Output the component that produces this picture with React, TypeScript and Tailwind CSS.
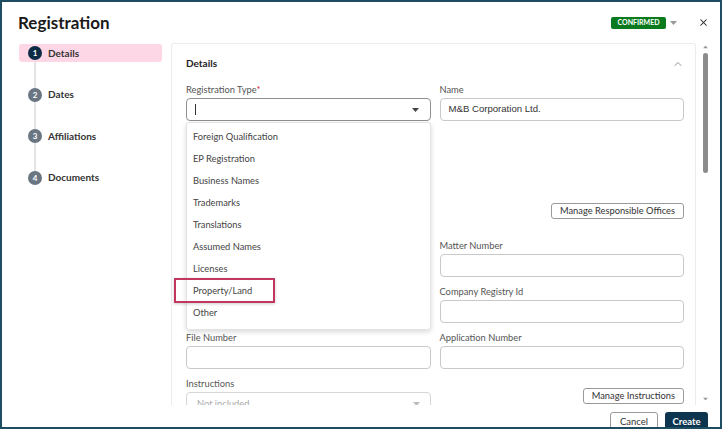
import { ChevronUp, X } from "lucide-react";

const steps = ["Details", "Dates", "Affiliations", "Documents"];

const options = [
  "Foreign Qualification",
  "EP Registration",
  "Business Names",
  "Trademarks",
  "Translations",
  "Assumed Names",
  "Licenses",
  "Property/Land",
  "Other",
];

function Caret({ className = "" }: { className?: string }) {
  return (
    <svg width="7" height="4" viewBox="0 0 7 4" className={className}>
      <path d="M0 0h7L3.5 4z" fill="currentColor" />
    </svg>
  );
}

function Field({ label, value, required }: { label: string; value?: string; required?: boolean }) {
  return (
    <div>
      <div className="text-[9.3px] leading-[13px] text-[#555]">
        {label}
        {required && <span className="text-[#d11f3a]">*</span>}
      </div>
      <div className="mt-[2px] flex h-[23px] items-center rounded-[4px] border border-[#c9c9c9] bg-white px-[8px] font-['Liberation_Sans',sans-serif] text-[9.6px] text-[#333]">
        {value}
      </div>
    </div>
  );
}

export default function App() {
  return (
    <div className="flex h-[429px] w-[722px] flex-col overflow-hidden border-2 border-[#1e4d62] bg-white font-['Lato',sans-serif] text-[#333]">
      <div className="flex h-[41px] shrink-0 items-center pl-[16px] pr-[11px]">
        <h1 className="text-[17px] font-bold leading-none text-[#1a1a1a]">Registration</h1>
        <div className="ml-auto flex items-center">
          <span className="flex h-[12px] w-[55px] items-center justify-center rounded-[2px] bg-[#0b7a1f] text-[7px] font-bold text-white">
            CONFIRMED
          </span>
          <Caret className="ml-[4px] text-[#999]" />
          <X className="ml-[21px] h-[11px] w-[11px] text-[#222]" strokeWidth={2.2} />
        </div>
      </div>

      <div className="flex min-h-0 flex-1">
        <div className="w-[169px] shrink-0 pl-[17px]">
          <div className="relative w-[143px]">
            <div className="absolute left-[15px] top-[9px] h-[125px] w-[2px] bg-[#e4e4e4]" />
            {steps.map((s, i) => (
              <div
                key={s}
                className={`relative flex h-[18px] items-center rounded-[3px] pl-[9px] ${
                  i === 0 ? "bg-[#fdd7e5]" : ""
                } ${i > 0 ? "mt-[23.5px]" : "mt-[1px]"}`}
              >
                <span
                  className={`flex h-[14px] w-[14px] items-center justify-center rounded-full text-[8px] font-bold text-white ${
                    i === 0 ? "bg-[#0c2c45]" : "bg-[#6a7783]"
                  }`}
                >
                  {i + 1}
                </span>
                <span className="ml-[6px] text-[10px] font-bold text-[#333]">{s}</span>
              </div>
            ))}
          </div>
        </div>

        <div className="min-w-0 flex-1 overflow-hidden">
          <div className="relative rounded-[3px] border border-[#ececec] bg-white pb-[20px] pl-[14px] pr-[11px] pt-[13px] shadow-[0_0_4px_rgba(0,0,0,0.06)]">
            <div className="flex h-[13px] items-center justify-between">
              <span className="text-[10px] font-bold leading-[13px] text-[#222]">Details</span>
              <ChevronUp className="h-[12px] w-[12px] text-[#777]" strokeWidth={1.6} />
            </div>

            <div className="mt-[13px] grid grid-cols-2 gap-x-[9px]">
              <div>
                <div className="text-[9.3px] leading-[13px] text-[#555]">
                  Registration Type<span className="text-[#d11f3a]">*</span>
                </div>
                <div className="relative mt-[2px]">
                  <div className="flex h-[23px] items-center rounded-[4px] border border-[#8f8f8f] bg-white px-[8px]">
                    <span className="h-[11px] w-px bg-[#333]" />
                    <Caret className="ml-auto mr-[3px] text-[#444]" />
                  </div>
                  <div className="absolute left-0 top-[24px] z-10 w-full rounded-[3px] border border-[#e3e3e3] bg-white pb-[5px] pt-[3px] shadow-[0_2px_5px_rgba(0,0,0,0.15)]">
                    {options.map((o) => (
                      <div key={o} className="flex h-[22px] items-center pl-[6px] text-[9.3px] text-[#444]">
                        {o}
                      </div>
                    ))}
                  </div>
                  <div className="absolute left-[-12px] top-[180px] z-20 h-[25px] w-[101px] border-2 border-[#c3375f] shadow-[0_1px_3px_rgba(0,0,0,0.2)]" />
                </div>
              </div>
              <Field label="Name" value="M&B Corporation Ltd." />
            </div>

            <div className="mt-[82px] flex justify-end">
              <button className="h-[16px] rounded-[3px] border border-[#9a9a9a] px-[8px] text-[9.3px] leading-none text-[#333]">
                Manage Responsible Offices
              </button>
            </div>

            <div className="mt-[20px] grid grid-cols-2 gap-x-[9px]">
              <div />
              <Field label="Matter Number" />
            </div>
            <div className="mt-[8px] grid grid-cols-2 gap-x-[9px]">
              <div />
              <Field label="Company Registry Id" />
            </div>
            <div className="mt-[8px] grid grid-cols-2 gap-x-[9px]">
              <Field label="File Number" />
              <Field label="Application Number" />
            </div>
            <div className="mt-[8px] grid grid-cols-2 gap-x-[9px]">
              <div>
                <div className="text-[9.3px] leading-[13px] text-[#555]">Instructions</div>
                <div className="mt-[2px] flex h-[23px] items-center rounded-[4px] border border-[#d6d6d6] bg-white px-[10px] text-[9.3px] text-[#aaa]">
                  Not included
                  <Caret className="ml-auto text-[#bbb]" />
                </div>
              </div>
              <div className="flex justify-end pt-[11px]">
                <button className="h-[16px] rounded-[3px] border border-[#9a9a9a] px-[8px] text-[9.3px] leading-none text-[#333]">
                  Manage Instructions
                </button>
              </div>
            </div>
          </div>
        </div>

        <div className="flex w-[24px] shrink-0 flex-col items-start pl-[6px]">
          <div className="mt-[2px] flex w-[7px] justify-center">
            <Caret className="rotate-180 scale-75 text-[#999]" />
          </div>
          <div className="ml-[1px] mt-[4px] h-[120px] w-[5px] rounded-full bg-[#8c8c8c]" />
          <div className="mt-auto mb-[4px] flex w-[7px] justify-center">
            <Caret className="scale-75 text-[#999]" />
          </div>
        </div>
      </div>

      <div className="flex h-[22px] shrink-0 items-start justify-end gap-[7px] overflow-hidden pr-[12px] pt-[7px]">
        <button className="h-[24px] w-[48px] rounded-[3px] border border-[#9a9a9a] bg-white pb-[4px] text-[9.5px] text-[#333]">
          Cancel
        </button>
        <button className="h-[24px] w-[43px] rounded-[3px] bg-[#0e3550] pb-[4px] text-[9.5px] font-bold text-white">
          Create
        </button>
      </div>
    </div>
  );
}
